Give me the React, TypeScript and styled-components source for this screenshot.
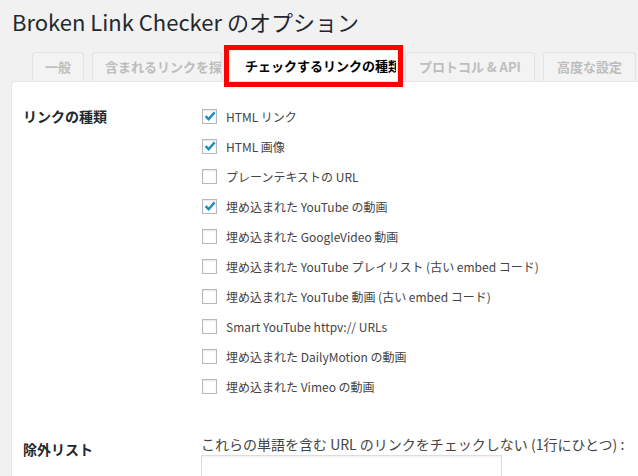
import styled, { createGlobalStyle } from "styled-components";

const GlobalStyle = createGlobalStyle`
  body {
    margin: 0;
    background: #f1f1f1;
    font-family: "Noto Sans CJK JP", "Noto Sans", sans-serif;
    color: #444;
  }
`;

const Wrap = styled.div`
  padding: 0 0 0 11px;
  overflow: hidden;
  height: 476px;
`;

const Title = styled.h1`
  margin: 0;
  padding: 6px 0 0 1px;
  font-size: 22px;
  font-weight: 400;
  line-height: 30px;
  color: #23282d;
`;

const TabBar = styled.div`
  display: flex;
  align-items: flex-end;
  gap: 8px;
  margin-top: 15px;
  padding-left: 21px;
  height: 30px;
`;

// the current tab is drawn white and framed with a thick red box
const Tab = styled.div<{ $w: number; $active?: boolean }>`
  box-sizing: border-box;
  flex: none;
  width: ${(p) => p.$w}px;
  height: ${(p) => (p.$active ? 30 : 29)}px;
  padding: 0 ${(p) => (p.$active ? 14 : 12)}px;
  border: 1px solid ${(p) => (p.$active ? "#fff" : "#e3e3e3")};
  border-bottom: none;
  border-radius: ${(p) => (p.$active ? "0" : "4px 4px 0 0")};
  background: ${(p) => (p.$active ? "#fff" : "#f3f3f3")};
  color: ${(p) => (p.$active ? "#000" : "#bdbdbd")};
  font-size: 13px;
  font-weight: 700;
  line-height: 28px;
  white-space: nowrap;
  overflow: hidden;
  text-overflow: clip;
  text-align: ${(p) => (p.$active ? "left" : "center")};
  outline: ${(p) => (p.$active ? "5px solid #f00" : "none")};
  outline-offset: 1px;
  position: relative;
  z-index: ${(p) => (p.$active ? 2 : 0)};
`;

const Panel = styled.div`
  background: #fff;
  border-top: 1px solid #e5e5e5;
  border-left: 1px solid #e5e5e5;
  border-top-left-radius: 4px;
  padding: 19px 0 40px 11px;
  min-height: 400px;
`;

const Section = styled.div<{ $top?: number }>`
  display: grid;
  grid-template-columns: 178px 1fr;
  margin-top: ${(p) => p.$top ?? 0}px;
`;

const Heading = styled.div<{ $pad?: number; $lh?: number }>`
  padding-top: ${(p) => p.$pad ?? 0}px;
  font-size: 14px;
  font-weight: 700;
  line-height: ${(p) => p.$lh ?? 30}px;
  color: #23282d;
`;

const OptionList = styled.div`
  display: flex;
  flex-direction: column;
`;

const Option = styled.label`
  display: flex;
  align-items: center;
  gap: 9px;
  height: 30px;
  padding-left: 1px;
  font-size: 12px;
  color: #444;
  white-space: nowrap;
`;

const Box = styled.span`
  box-sizing: border-box;
  flex: none;
  width: 15px;
  height: 15px;
  border: 1px solid #b4b9be;
  background: #fff;
  box-shadow: inset 0 1px 2px rgba(0, 0, 0, 0.1);
  display: flex;
  align-items: center;
  justify-content: center;
`;

const Description = styled.div`
  font-size: 14px;
  line-height: 20px;
  color: #444;
  white-space: nowrap;
`;

const TextArea = styled.div`
  box-sizing: border-box;
  width: 301px;
  height: 70px;
  margin-top: 1px;
  border: 1px solid #ddd;
  box-shadow: inset 0 1px 2px rgba(0, 0, 0, 0.07);
  background: #fff;
`;

const Check = () => (
  <svg width="12" height="12" viewBox="0 0 12 12">
    <path d="M1.6 6.2 L4.6 9.2 L10.6 2.4" fill="none" stroke="#1e8cbe" strokeWidth="2.4" />
  </svg>
);

const tabs = [
  { label: "一般", w: 52 },
  { label: "含まれるリンクを探す", w: 130 },
  { label: "チェックするリンクの種類", w: 167, active: true },
  { label: "プロトコル & API", w: 130 },
  { label: "高度な設定", w: 93 },
];

const options = [
  { label: "HTML リンク", checked: true },
  { label: "HTML 画像", checked: true },
  { label: "プレーンテキストの URL", checked: false },
  { label: "埋め込まれた YouTube の動画", checked: true },
  { label: "埋め込まれた GoogleVideo 動画", checked: false },
  { label: "埋め込まれた YouTube プレイリスト (古い embed コード)", checked: false },
  { label: "埋め込まれた YouTube 動画 (古い embed コード)", checked: false },
  { label: "Smart YouTube httpv:// URLs", checked: false },
  { label: "埋め込まれた DailyMotion の動画", checked: false },
  { label: "埋め込まれた Vimeo の動画", checked: false },
];

function App() {
  return (
    <>
      <GlobalStyle />
      <Wrap>
        <Title>Broken Link Checker のオプション</Title>
        <TabBar>
          {tabs.map((t) => (
            <Tab key={t.label} $w={t.w} $active={t.active}>
              {t.label}
            </Tab>
          ))}
        </TabBar>
        <Panel>
          <Section>
            <Heading>リンクの種類</Heading>
            <OptionList>
              {options.map((o) => (
                <Option key={o.label}>
                  <Box>{o.checked && <Check />}</Box>
                  {o.label}
                </Option>
              ))}
            </OptionList>
          </Section>
          <Section $top={33}>
            <Heading $pad={5} $lh={20}>
              除外リスト
            </Heading>
            <div>
              <Description>
                これらの単語を含む URL のリンクをチェックしない (1行にひとつ) :
              </Description>
              <TextArea />
            </div>
          </Section>
        </Panel>
      </Wrap>
    </>
  );
}

export default App;
